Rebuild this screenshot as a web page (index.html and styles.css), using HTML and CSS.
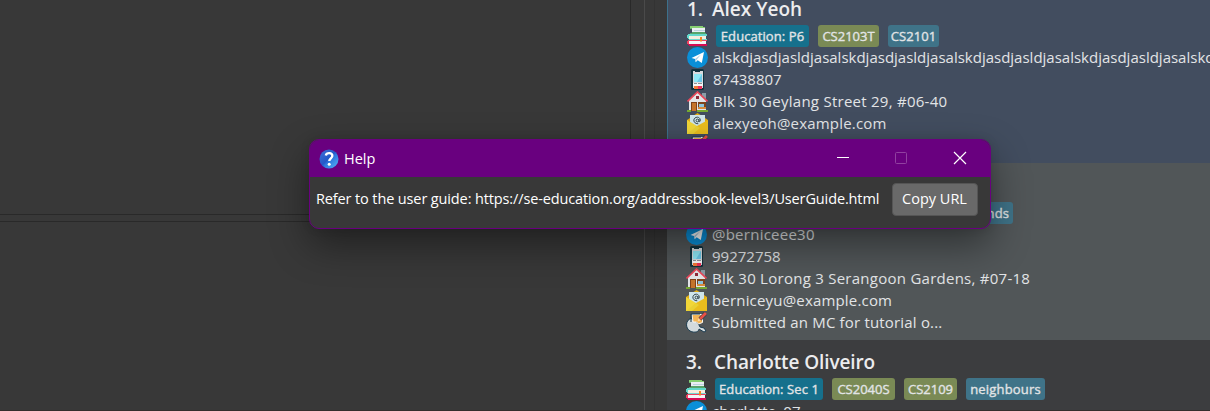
FILE: index.html
```
<!DOCTYPE html>
<html lang="en">
<head>
<meta charset="utf-8">
<title>Address Book</title>
<link rel="stylesheet" href="styles.css">
</head>
<body>
<svg class="defs" width="0" height="0">
  <symbol id="books" viewBox="0 0 21 21">
    <path fill="#e9eef3" d="M5 3h13v4H5z"/><path fill="#bcd3de" d="M7 5h11v1H7z"/><path fill="#86cf72" d="M3 1h13v1h2v1H3z"/><path fill="#69b86d" d="M3 3h2v1H3z"/><path fill="#58a56c" d="M5 7h13v1h1v1H3V8h2z"/>
    <path fill="#62d8cb" d="M1 9h19v2H2v3H1v-1H0v-3h1z"/><path fill="#f5eedf" d="M2 11h17v3H2z"/><path fill="#72d9cf" d="M2 14h18v1H2z"/><path fill="#ee4260" d="M1 15h19v1H2v3H0v-3h1z"/>
    <path fill="#f4f5f7" d="M2 16h17v3H2z"/><path fill="#d60b52" d="M1 19h19v2H2v-1H1z"/><path fill="#f08a24" d="M13 12h2v5l-1-1-1 1z"/>
  </symbol>
  <symbol id="telegram" viewBox="0 0 21 21">
    <circle cx="10.5" cy="10.5" r="10.5" fill="#0a8fd8"/><path fill="#fff" d="M4.5 11 17 5l-2.2 11-4.1-2.8-2 2-.6-3.2z"/><path fill="#a9cce3" d="m8 12 6-4.5-4.4 5.3-.9 2.2z"/>
  </symbol>
  <symbol id="phone" viewBox="0 0 21 21">
    <rect x="4" width="13" height="21" rx="1.5" fill="#12323d"/><path fill="#d8dadd" d="M6 2h2v1h5V2h3v17H6z"/><path fill="#8ee8f5" d="M7 5h8v8H7z"/><path fill="#6bc8e8" d="m15 5v8h-5z"/><path fill="#f7f7f7" d="M6 14h10v3H6z"/><path fill="#f27838" d="M7 17h4v3H7z"/><path fill="#ed3058" d="M11 17h4v3h-4z"/><path fill="#8b9297" d="M7 14h3v1H7zm4 0h4v1h-4z"/>
  </symbol>
  <symbol id="house" viewBox="0 0 21 21">
    <path fill="#8c9ca7" d="M15 2h4v8h-4z"/><path fill="#e4e5e8" d="M2 9 10.5 1 19 9v11H2z"/><path fill="none" stroke="#e94659" stroke-width="1.7" d="M.5 10.5 10.5 1l10 9.5"/><path fill="#8f293a" d="M9 5h3v3H9z"/>
    <path fill="#80431b" d="M4 11h6v9H4zm7 0h8v7h-8z"/><path fill="#c5742c" d="M5 12h4v8H5z"/><path fill="#8cc4dc" d="M12 13h5v3h-5z"/><path fill="#d98b3b" d="M11 16h8v2h-8z"/><path fill="#76a832" d="M0 19h4v2H0zm10 0h11v2H10z"/>
  </symbol>
  <symbol id="mail" viewBox="0 0 21 21">
    <path fill="#e1ad16" d="M0 7 10.5 0 21 7v3H0z"/><path fill="#cfe5ea" d="M3 2h15v10l-7.5 4L3 11z"/><path fill="#f1d638" d="M0 7l10 6v8H0z"/><path fill="#e9bd1e" d="m21 7-11 6-8 8h19z"/><path fill="#e9d033" d="m0 21 10-8 3 2-7 6z"/>
    <circle cx="10.5" cy="7.5" r="1.4" fill="none" stroke="#34464d"/><path fill="none" stroke="#34464d" d="M12 6v2.5c2 1 2-4-1.5-4.3-5 0-5 6.6.8 6.6"/>
  </symbol>
  <symbol id="note" viewBox="0 0 21 21">
    <path fill="#d3dadd" stroke="#1b3c50" d="M5 6.5C-.5 8-1 16 4 19c5 2.500 9 .5 9-2l5 3 2-1-2-3-4-1-2-4z"/><path fill="#f3b456" stroke="#f7f7f5" d="M6 2.500h10.500v8l-4 1.500-2-2H7z"/><path fill="none" stroke="#1b3c50" d="M5 10V2h9"/><path stroke="#1b3c50" stroke-width="4" d="m14 7 6-6"/><path stroke="#e85045" stroke-width="3" d="m14 7 6-6"/><path fill="#f7d9a6" d="m11.500 9.500 1-3 2 2z"/>
  </symbol>
</svg>

<main class="app">
  <section class="panes">
    <div class="result"></div>
    <div class="details"></div>
  </section>
  <div class="gutter"></div>
  <section class="people">
    <article class="card selected">
      <h2 class="name"><span class="num">1.</span><span>Alex Yeoh</span></h2>
      <div class="row tags"><svg class="icon"><use href="#books"/></svg><span class="tag level w93">Education: P6</span><span class="tag module w61">CS2103T</span><span class="tag group w51">CS2101</span></div>
      <div class="row"><svg class="icon"><use href="#telegram"/></svg><span>alskdjasdjasldjasalskdjasdjasldjasalskdjasdjasldjasalskdjasdjasldjasalskdjasdjasldjas</span></div>
      <div class="row"><svg class="icon"><use href="#phone"/></svg><span>87438807</span></div>
      <div class="row"><svg class="icon"><use href="#house"/></svg><span class="addr">Blk 30 Geylang Street 29, #06-40</span></div>
      <div class="row"><svg class="icon"><use href="#mail"/></svg><span class="mail">alexyeoh@example.com</span></div>
      <div class="row"><svg class="icon"><use href="#note"/></svg></div>
    </article>
    <article class="card even">
      <h2 class="name"><span class="num">2.</span><span>Bernice Yu</span></h2>
      <div class="row tags"><svg class="icon"><use href="#books"/></svg><span class="tag level w108">Education: Sec 3</span><span class="tag module w63">CS2030S</span><span class="tag group friends">friends</span></div>
      <div class="row"><svg class="icon"><use href="#telegram"/></svg><span class="handle">@berniceee30</span></div>
      <div class="row"><svg class="icon"><use href="#phone"/></svg><span>99272758</span></div>
      <div class="row"><svg class="icon"><use href="#house"/></svg><span class="addr">Blk 30 Lorong 3 Serangoon Gardens, #07-18</span></div>
      <div class="row"><svg class="icon"><use href="#mail"/></svg><span class="mail">berniceyu@example.com</span></div>
      <div class="row"><svg class="icon"><use href="#note"/></svg><span class="remark">Submitted an MC for tutorial o...</span></div>
    </article>
    <article class="card">
      <h2 class="name third"><span class="num">3.</span><span>Charlotte Oliveiro</span></h2>
      <div class="row tags"><svg class="icon"><use href="#books"/></svg><span class="tag level w108">Education: Sec 1</span><span class="tag module w63">CS2040S</span><span class="tag module w53">CS2109</span><span class="tag group w79">neighbours</span></div>
      <div class="row"><svg class="icon"><use href="#telegram"/></svg><span class="mail">charlotte_07</span></div>
    </article>
  </section>
</main>

<div class="dialog" role="dialog">
  <header class="titlebar">
    <svg class="help" viewBox="0 0 20 20"><defs><linearGradient id="ball" x2="1" y2="1"><stop stop-color="#3f70d8"/><stop offset=".48" stop-color="#2459c8"/><stop offset=".55" stop-color="#2d75dd"/><stop offset="1" stop-color="#56b5f8"/></linearGradient></defs><circle cx="10" cy="10" r="9.5" fill="url(#ball)"/><path d="M6.8 6.5c.8-3.3 6.8-3.2 6.5.5-.2 2.4-3 2.3-3 5" fill="none" stroke="#fff" stroke-width="2.4"/><circle cx="10.2" cy="15.3" r="1.5" fill="#fff"/></svg>
    <span class="title">Help</span>
    <svg class="controls" viewBox="0 0 140 38" fill="none"><path class="line" d="M7 18.5h12"/><rect class="max" x="65.5" y="13.5" width="11" height="11" rx="1"/><path class="close" d="m124 13 12 12m0-12-12 12"/></svg>
  </header>
  <div class="content"><span class="message">Refer to the user guide: https://se-education.org/addressbook-level3/UserGuide.html</span><button class="copy">Copy URL</button></div>
</div>
</body>
</html>
```
FILE: styles.css
```
* { box-sizing: border-box; }
body { margin: 0; width: 1210px; height: 411px; overflow: hidden; background: #383838; color: #e2e4e6; font: 15px/22px "Open Sans", "Noto Sans", sans-serif; }
.defs { display: block; height: 0; }
.app { display: flex; height: 411px; overflow: hidden; border-bottom: 1px solid #342d2e; }
.panes { width: 644px; flex: none; display: flex; flex-direction: column; gap: 6px; }
.result { width: 631px; height: 215px; border: solid #292929; border-width: 0 1px 1px 0; }
.details { flex: 1; border-top: 1px solid #292929; }
.gutter { flex: none; width: 23px; border-left: 1px solid #4a4a4a; background: linear-gradient(90deg, #383838 9px, #333 9px, #333 10px, #383838 10px); }
.people { flex: 1; min-width: 0; margin-top: -14px; }
.card { height: 177px; padding: 9px 0 0 19px; background: #3c3d3f; overflow: hidden; white-space: nowrap; }
.card.selected { background: #424d5f; border-left: 1px solid #3d718b; }
.card.even { background: #515658; }
.name { display: flex; margin: 0; height: 29px; font-size: 19px; line-height: 26px; font-weight: 600; color: #ececee; }
.selected .name { padding-top: 1px; }
.num { width: 25px; flex: none; }
.third .num { width: 28px; }
.third { letter-spacing: -.1px; }
.row { display: flex; align-items: center; height: 22px; gap: 5px; }
.icon { width: 21px; height: 21px; flex: none; }
.tags { gap: 9px; }
.tags .icon { margin-right: -1px; }
.selected .tags, .even .tags { padding-top: 1px; }
.addr { letter-spacing: .26px; }
.mail { letter-spacing: .18px; }
.remark { letter-spacing: .18px; }
.handle { letter-spacing: .25px; }
.tag { height: 22px; flex: none; border-radius: 3px; display: flex; align-items: center; justify-content: center; font-size: 13px; line-height: 20px; letter-spacing: .08px; -webkit-text-stroke: .35px currentColor; }
.level { background: #16708c; }
.module { background: #7a8a55; letter-spacing: 0; }
.group { background: #3f7388; }
.w93 { width: 93px; } .w61 { width: 61px; } .w51 { width: 51px; }
.w108 { width: 108px; } .w63 { width: 63px; } .w53 { width: 53px; } .w79 { width: 79px; letter-spacing: .18px; }
.friends { margin-left: 58px; width: 51px; }
.dialog { position: absolute; left: 309px; top: 139px; width: 682px; height: 90px; overflow: hidden; border: 1px solid #69007f; border-radius: 10px; background: #383838; box-shadow: 0 16px 38px rgba(0, 0, 0, .42), 0 0 10px rgba(0, 0, 0, .1); color: #fff; }
.titlebar { height: 37px; background: #69007f; display: flex; align-items: center; padding-left: 9px; font-size: 14.5px; }
.help { width: 20px; height: 20px; margin-right: 5px; }
.controls { width: 140px; height: 38px; margin: -2px 20px 0 auto; }
.line, .close { stroke: #fff; stroke-width: 1.2; }
.max { stroke: #9140a0; }
.content { display: flex; align-items: center; padding: 6px 12.5px 0 6px; justify-content: space-between; font-size: 14.5px; white-space: nowrap; }
.message { letter-spacing: -.125px; padding-bottom: 1px; }
.copy { width: 86px; height: 33px; border: 1px solid #555; border-radius: 4px; padding: 0 0 2px; background: #696969; color: #fff; font: inherit; }
```
